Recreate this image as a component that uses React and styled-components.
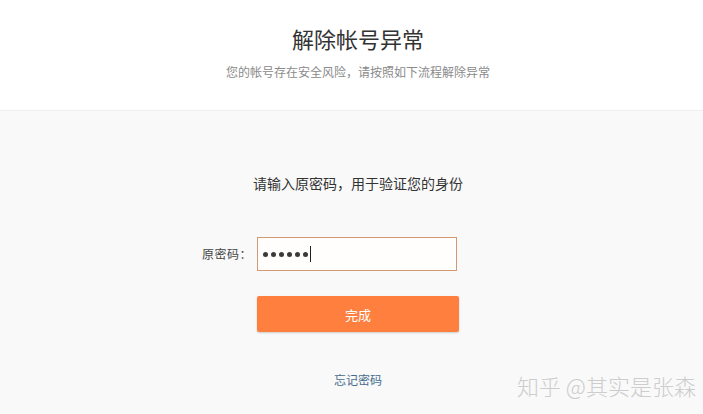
import React from "react";
import styled, { createGlobalStyle } from "styled-components";

const GlobalStyle = createGlobalStyle`
  html, body {
    margin: 0;
    padding: 0;
    background: #f9f9f9;
  }
  body {
    font-family: "Noto Sans CJK SC", "Noto Sans", "Liberation Sans", sans-serif;
    color: #333;
  }
`;

const Page = styled.div`
  position: relative;
  min-height: 414px;
  display: flex;
  flex-direction: column;
  overflow: hidden;
`;

const Header = styled.header`
  background: #fff;
  height: 111px;
  border-bottom: 1px solid #eeeeee;
  box-sizing: border-box;
  padding: 23px 0 0 13px;
  display: flex;
  flex-direction: column;
  align-items: center;
`;

const Title = styled.h1`
  margin: 0;
  font-size: 22px;
  line-height: 30px;
  font-weight: 400;
  color: #333;
`;

const Subtitle = styled.p`
  margin: 10px 0 0;
  font-size: 12px;
  line-height: 18px;
  color: #8a8a8a;
`;

const Main = styled.main`
  flex: 1;
  background: #f9f9f9;
  padding: 62px 0 0 13px;
  display: flex;
  flex-direction: column;
  align-items: center;
`;

const Lead = styled.p`
  margin: 0;
  font-size: 14px;
  line-height: 20px;
  color: #333;
`;

const Form = styled.form`
  margin-top: 44px;
  width: 100%;
  display: grid;
  grid-template-columns: 1fr 202px 1fr;
  row-gap: 25px;
  align-items: center;
`;

const Label = styled.label`
  justify-self: end;
  padding-right: 5px;
  font-size: 12px;
  line-height: 18px;
  color: #444;
  letter-spacing: 0.5px;
`;

const Field = styled.div`
  width: 200px;
  height: 34px;
  box-sizing: border-box;
  border: 1px solid #d39a71;
  background: #fffefc;
  display: flex;
  align-items: center;
  padding-left: 5px;
  gap: 3px;
`;

const Dot = styled.span`
  width: 5px;
  height: 5px;
  border-radius: 50%;
  background: #3a3a3a;
`;

const Caret = styled.span`
  width: 1px;
  height: 16px;
  margin-left: -1px;
  background: #222;
`;

const Submit = styled.button`
  grid-column: 2;
  width: 202px;
  height: 36px;
  border: none;
  border-radius: 2px;
  background: #fe7f3e;
  box-shadow: 0 1px 2px rgba(0, 0, 0, 0.18);
  color: #fff;
  font-family: inherit;
  font-size: 13px;
  padding: 0;
  cursor: pointer;
`;

const Forgot = styled.a`
  margin-top: 39px;
  font-size: 12px;
  line-height: 18px;
  color: #456c8e;
  text-decoration: none;
`;

const Watermark = styled.div`
  position: absolute;
  left: 517px;
  top: 373px;
  font-size: 22px;
  line-height: 24px;
  font-weight: 300;
  color: #cdcdcd;
  white-space: nowrap;
  pointer-events: none;
`;

export default function App() {
  return (
    <Page>
      <GlobalStyle />
      <Header>
        <Title>解除帐号异常</Title>
        <Subtitle>您的帐号存在安全风险，请按照如下流程解除异常</Subtitle>
      </Header>
      <Main>
        <Lead>请输入原密码，用于验证您的身份</Lead>
        <Form onSubmit={e => e.preventDefault()}>
          <Label>原密码：</Label>
          <Field>
            {[0, 1, 2, 3, 4, 5].map(i => (
              <Dot key={i} />
            ))}
            <Caret />
          </Field>
          <span />
          <Submit type="submit">完成</Submit>
        </Form>
        <Forgot href="#">忘记密码</Forgot>
      </Main>
      <Watermark>知乎 @其实是张森</Watermark>
    </Page>
  );
}
